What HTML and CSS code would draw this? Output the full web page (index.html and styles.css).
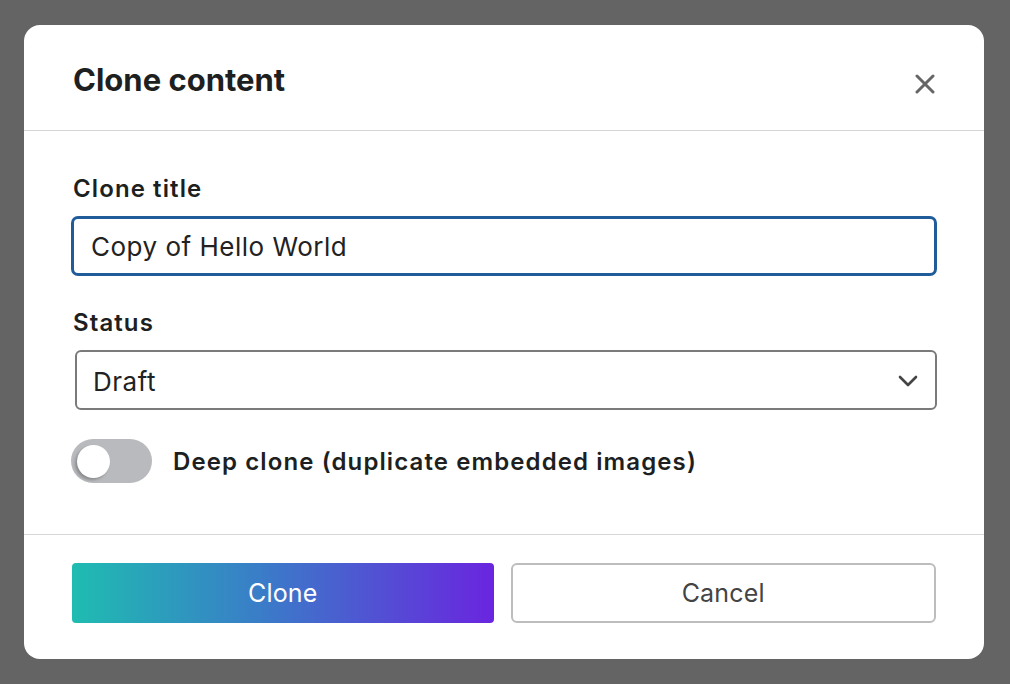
FILE: index.html
```html
<!DOCTYPE html>
<html lang="en">
<head>
    <meta charset="UTF-8">
    <title>Clone content</title>
    <link rel="stylesheet" href="styles.css">
</head>
<body>
    <!-- Clone dialog -->
    <div class="modal">
        <div class="modal-header">
            <h2 class="modal-title">Clone content</h2>
            <button class="close-btn" title="Close">
                <svg width="20" height="20" viewBox="0 0 20 20">
                    <path d="M2 2 L18 18 M18 2 L2 18" stroke="#666" stroke-width="3" stroke-linecap="round"/>
                </svg>
            </button>
        </div>

        <div class="modal-body">
            <div class="field">
                <label class="field-label" for="cloneTitle">Clone title</label>
                <input id="cloneTitle" class="text-input" type="text" value="Copy of Hello World">
            </div>

            <div class="field">
                <label class="field-label" for="cloneStatus">Status</label>
                <div class="select">
                    <span>Draft</span>
                    <svg width="20" height="12" viewBox="0 0 20 12">
                        <path d="M2 2 L10 10 L18 2" fill="none" stroke="#444" stroke-width="2.6" stroke-linecap="round" stroke-linejoin="round"/>
                    </svg>
                </div>
            </div>

            <div class="toggle-row">
                <span class="toggle"><span class="knob"></span></span>
                <span class="toggle-label">Deep clone (duplicate embedded images)</span>
            </div>
        </div>

        <div class="modal-footer">
            <button class="btn btn-primary">Clone</button>
            <button class="btn btn-secondary">Cancel</button>
        </div>
    </div>
</body>
</html>
```

FILE: styles.css
```css
/* Page backdrop */
body {
    margin: 0;
    height: 684px;
    background: #646464;
    font-family: 'Inter', 'Liberation Sans', sans-serif;
    color: #1d1f21;
    display: flex;
    align-items: flex-start;
    padding: 25px 0 0 24px;
    box-sizing: border-box;
}

/* Dialog box */
.modal {
    width: 960px;
    height: 634px;
    background: #fff;
    border-radius: 16px;
    display: flex;
    flex-direction: column;
}

.modal-header {
    height: 106px;
    display: flex;
    align-items: center;
    justify-content: space-between;
    padding: 4px 49px 0 49px;
    box-sizing: border-box;
    border-bottom: 1px solid #d6d6d6;
}

.modal-title {
    margin: 0;
    font-size: 31px;
    font-weight: 700;
}

.close-btn {
    border: none;
    background: none;
    padding: 0;
    margin-top: 8px;
    width: 20px;
    height: 20px;
    cursor: pointer;
}

/* Form body */
.modal-body {
    flex: 1;
    padding: 44px 47px 0 47px;
    border-bottom: 1px solid #d6d6d6;
}

.field {
    margin-bottom: 33px;
}

.field-label {
    display: block;
    font-size: 24px;
    font-weight: 600;
    letter-spacing: 1.1px;
    line-height: 28px;
    margin: 0 0 13px 2px;
}

.text-input {
    width: 100%;
    height: 60px;
    box-sizing: border-box;
    border: 3px solid #1f5c99;
    border-radius: 7px;
    padding: 0 17px;
    font-family: inherit;
    font-size: 26px;
    letter-spacing: 0.5px;
    color: #222;
    outline: none;
}

.select {
    margin-left: 4px;
    height: 60px;
    box-sizing: border-box;
    border: 2px solid #7a7a7a;
    border-radius: 6px;
    padding: 2px 17px 0 16px;
    display: flex;
    align-items: center;
    justify-content: space-between;
    font-size: 26px;
    letter-spacing: 0.5px;
    color: #222;
}

/* Toggle switch */
.toggle-row {
    display: flex;
    align-items: center;
    gap: 21px;
    margin-top: -4px;
}

.toggle {
    width: 81px;
    height: 44px;
    border-radius: 22px;
    background: #b9babd;
    display: flex;
    align-items: center;
    padding-left: 6px;
    box-sizing: border-box;
}

.knob {
    width: 33px;
    height: 33px;
    border-radius: 50%;
    background: #fff;
    box-shadow: -2px 2px 3px rgba(0,0,0,0.25);
}

.toggle-label {
    font-size: 24px;
    font-weight: 600;
    letter-spacing: 1.1px;
}

/* Footer buttons */
.modal-footer {
    height: 124px;
    display: flex;
    gap: 17px;
    padding: 28px 48px 0 48px;
    box-sizing: border-box;
}

.btn {
    flex: 1;
    height: 60px;
    box-sizing: border-box;
    font-family: inherit;
    font-size: 25px;
    letter-spacing: 0.2px;
    cursor: pointer;
}

.btn-primary {
    border: none;
    border-radius: 4px;
    color: #fff;
    background: linear-gradient(90deg, #1fbcb1, #3a7cc8 45%, #6a25df);
}

.btn-secondary {
    border: 2px solid #bdbdbd;
    border-radius: 6px;
    background: #fff;
    color: #444;
}
```
